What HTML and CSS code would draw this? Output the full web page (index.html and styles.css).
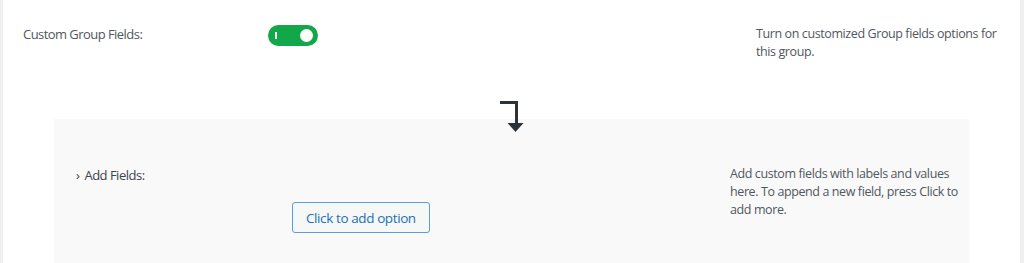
FILE: index.html
```html
<!DOCTYPE html>
<html>
	<head>
		<meta charset="UTF-8">
		<title>Custom Group Fields</title>
		<link rel="stylesheet" href="styles.css">
	</head>
	<body>
		<div class="panel">
			<div class="row">
				<div class="row-label">Custom Group Fields:</div>
				<div class="row-field">
					<label class="toggle">
						<span class="toggle-on"></span>
						<span class="toggle-knob"></span>
					</label>
				</div>
				<div class="row-desc">Turn on customized Group fields options for this group.</div>
			</div>

			<div class="fields-box">
				<svg class="arrow" width="26" height="38" viewBox="0 0 26 38">
					<path d="M1 5.5H17.5V27" fill="none" stroke="#2c3338" stroke-width="3"/>
					<path d="M8.5 26H24.5L16.5 35Z" fill="#2c3338"/>
				</svg>
				<div class="fields-label"><span class="chev">›</span>Add Fields:</div>
				<div class="fields-main">
					<button type="button" class="btn">Click to add option</button>
				</div>
				<div class="fields-desc">Add custom fields with labels and values here. To append a new field, press Click to add more.</div>
			</div>
		</div>
	</body>
</html>
```

FILE: styles.css
```css
*{padding:0;margin:0;box-sizing:border-box;}
body{background:#f0f0f1;font-family:"Open Sans","Noto Sans",sans-serif;font-size:12.5px;letter-spacing:-0.4px;color:#50575e;}
.panel{margin:0 4px 0 3px;height:263px;background:#fff;overflow:hidden;}

.row{display:flex;padding:25px 0 0 20px;line-height:18px;}
.row-label{width:245px;font-size:13px;letter-spacing:-0.55px;}
.row-field{width:488px;}
.row-desc{width:248px;}

.toggle{display:block;position:relative;width:50px;height:21px;border-radius:11px;background:#12a84a;}
.toggle-on{position:absolute;left:7px;top:7px;width:2px;height:7px;background:#fff;}
.toggle-knob{position:absolute;right:5px;top:4px;width:13px;height:13px;border-radius:50%;background:#fff;}

.fields-box{position:relative;display:flex;margin:58px 51px 0 51px;height:200px;padding:46px 0 0 22px;background:#f9f9f9;line-height:18px;}
.arrow{position:absolute;left:445px;top:-22px;}
.fields-label{width:216px;padding-top:1px;font-size:13px;letter-spacing:-0.5px;color:#3c434a;}
.chev{margin-right:5px;}
.fields-main{width:438px;}
.btn{margin-top:37px;height:31px;padding:0 13px;border:1px solid #5b9dd9;border-radius:3px;background:#f6f7f7;color:#2271b1;font-family:inherit;font-size:13.5px;letter-spacing:-0.4px;}
.fields-desc{width:236px;}
```
